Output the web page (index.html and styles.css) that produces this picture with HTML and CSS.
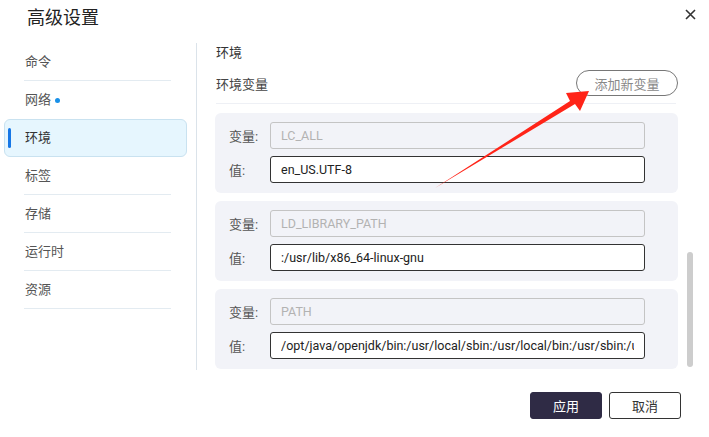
FILE: index.html
```html
<!DOCTYPE html>
<html lang="zh-CN">
  <head>
    <meta charset="UTF-8" />
    <meta name="viewport" content="width=device-width, initial-scale=1.0" />
    <title>高级设置</title>
    <link rel="stylesheet" href="styles.css">
  </head>
  <body>
    <div class="dialog">
      <!-- 标题栏 -->
      <div class="dialog-header">
        <h1 class="title">高级设置</h1>
        <a href="javascript:;" class="close" aria-label="关闭">
          <svg width="11" height="11" viewBox="0 0 11 11">
            <path d="M1 1 L10 10 M10 1 L1 10" stroke="#333" stroke-width="1.6" fill="none" />
          </svg>
        </a>
      </div>

      <div class="dialog-body">
        <!-- 左侧导航 -->
        <ul class="nav">
          <li class="nav-item">命令</li>
          <li class="nav-item before-active">网络<span class="dot"></span></li>
          <li class="nav-item active">环境</li>
          <li class="nav-item">标签</li>
          <li class="nav-item">存储</li>
          <li class="nav-item">运行时</li>
          <li class="nav-item">资源</li>
        </ul>

        <div class="divider"></div>

        <!-- 右侧内容 -->
        <div class="content">
          <div class="section-title">环境</div>
          <div class="section-row">
            <span>环境变量</span>
            <button class="btn-add">添加新变量</button>
          </div>
          <div class="section-line"></div>

          <div class="env-list">
            <div class="env-card">
              <div class="field">
                <label>变量:</label>
                <input class="input" type="text" value="LC_ALL" disabled />
              </div>
              <div class="field">
                <label>值:</label>
                <input class="input" type="text" value="en_US.UTF-8" />
              </div>
            </div>
            <div class="env-card">
              <div class="field">
                <label>变量:</label>
                <input class="input" type="text" value="LD_LIBRARY_PATH" disabled />
              </div>
              <div class="field">
                <label>值:</label>
                <input class="input" type="text" value=":/usr/lib/x86_64-linux-gnu" />
              </div>
            </div>
            <div class="env-card">
              <div class="field">
                <label>变量:</label>
                <input class="input" type="text" value="PATH" disabled />
              </div>
              <div class="field">
                <label>值:</label>
                <input class="input" type="text" value="/opt/java/openjdk/bin:/usr/local/sbin:/usr/local/bin:/usr/sbin:/usr/bin:/sbin:/bin" />
              </div>
            </div>
          </div>
        </div>

        <!-- 滚动条 -->
        <div class="scrollbar">
          <div class="thumb"></div>
        </div>
      </div>

      <!-- 底部按钮 -->
      <div class="dialog-footer">
        <button class="btn btn-primary">应用</button>
        <button class="btn btn-default">取消</button>
      </div>

      <!-- 标注箭头 -->
      <svg class="mark" width="709" height="437" viewBox="0 0 709 437">
        <path d="M435 188 L570 101 L566 93 L589 91 L580 111 L575 104 Z" fill="#ff2418" />
      </svg>
    </div>
  </body>
</html>
```

FILE: styles.css
```css
* {
  margin: 0;
  padding: 0;
  box-sizing: border-box;
}
ul {
  list-style: none;
}
body {
  background: #fff;
  font-family: Roboto, "Noto Sans CJK SC", sans-serif;
  font-size: 13px;
  color: #333;
}

.dialog {
  position: relative;
  width: 709px;
  height: 437px;
  overflow: hidden;
}

/* 标题栏 */
.dialog-header {
  display: flex;
  justify-content: space-between;
  align-items: flex-start;
  height: 43px;
  padding: 6px 13px 0 27px;
}
.title {
  font-size: 18px;
  font-weight: normal;
  line-height: 24px;
  color: #222;
}
.close {
  display: block;
  width: 11px;
  height: 11px;
  margin-top: 2px;
}

/* 主体 */
.dialog-body {
  display: flex;
  height: 327px;
}

.nav {
  width: 187px;
  padding-left: 4px;
}
.nav-item {
  position: relative;
  display: flex;
  align-items: center;
  height: 38px;
  padding-left: 21px;
  color: #555;
  line-height: 38px;
}
.nav-item::after {
  content: "";
  position: absolute;
  left: 20px;
  right: 16px;
  bottom: 0;
  height: 1px;
  background: #e3ebf1;
}
.nav-item.before-active::after,
.nav-item.active::after {
  display: none;
}
.nav-item.active {
  background: #e6f6fe;
  border: 1px solid #c9e2f0;
  border-radius: 6px;
  padding-left: 20px;
  color: #333;
}
.nav-item.active::before {
  content: "";
  position: absolute;
  left: 3px;
  top: 8px;
  width: 3px;
  height: 20px;
  border-radius: 2px;
  background: #1677e6;
}
.dot {
  width: 5px;
  height: 5px;
  margin-left: 4px;
  border-radius: 50%;
  background: #1890e8;
}

.divider {
  width: 1px;
  margin-left: 9px;
  background: #dbe3ea;
}

/* 内容区 */
.content {
  width: 463px;
  margin-left: 18px;
  overflow: hidden;
}
.section-title {
  height: 20px;
  line-height: 20px;
  padding-left: 1px;
}
.section-row {
  display: flex;
  justify-content: space-between;
  align-items: center;
  height: 26px;
  margin-top: 7px;
  padding-left: 1px;
  color: #444;
}
.btn-add {
  width: 102px;
  height: 26px;
  border: 1px solid #777;
  border-radius: 13px;
  background: #fff;
  color: #888;
  font-family: inherit;
  font-size: 13px;
}
.section-line {
  height: 1px;
  margin: 7px 2px 0 1px;
  background: #eef0f5;
}

.env-list {
  display: flex;
  flex-direction: column;
  gap: 8px;
  margin-top: 9px;
}
.env-card {
  display: flex;
  flex-direction: column;
  gap: 7px;
  padding: 9px 33px 10px 14px;
  background: #f2f3f8;
  border-radius: 6px;
}
.field {
  display: flex;
  align-items: center;
}
.field label {
  width: 41px;
  color: #555;
}
.input {
  width: 375px;
  height: 27px;
  padding: 0 10px;
  border: 1px solid #333;
  border-radius: 3px;
  background: #fff;
  color: #222;
  font-family: inherit;
  font-size: 12.5px;
  outline: none;
}
.input:disabled {
  border-color: #c4c4c4;
  background: #f2f3f8;
  color: #b2b2b2;
  -webkit-text-fill-color: #b2b2b2;
}

.scrollbar {
  width: 6px;
  margin-left: 9px;
}
.thumb {
  height: 115px;
  margin-top: 209px;
  border-radius: 3px;
  background: #cdcdcd;
}

/* 底部 */
.dialog-footer {
  display: flex;
  justify-content: flex-end;
  gap: 7px;
  padding: 22px 28px 0 0;
}
.btn {
  width: 72px;
  height: 27px;
  border-radius: 3px;
  font-family: inherit;
  font-size: 13px;
}
.btn-primary {
  border: 1px solid #2f2b45;
  background: #2f2b45;
  color: #fff;
}
.btn-default {
  border: 1px solid #333;
  background: #fff;
  color: #333;
}

.mark {
  position: absolute;
  left: 0;
  top: 0;
  pointer-events: none;
}
```
